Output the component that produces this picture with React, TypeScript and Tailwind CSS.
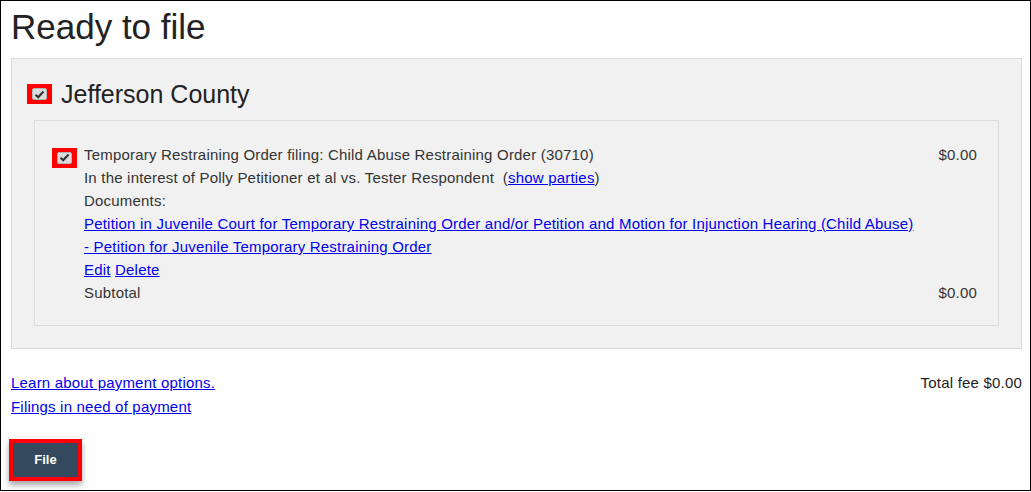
import React from "react";

function Check() {
  return (
    <span className="inline-flex items-center justify-center w-[25px] h-[20px] bg-[#ff0000] shrink-0">
      <span className="flex items-center justify-center w-[15px] h-[12px] bg-[#dcdcdc] border border-[#b5b5b5] rounded-[2px]">
        <svg width="11" height="9" viewBox="0 0 11 9">
          <path d="M1.5 4.8 L4.2 7.3 L9.5 1.5" fill="none" stroke="#333" strokeWidth="2.2" />
        </svg>
      </span>
    </span>
  );
}

export default function App() {
  const link = "text-[#0000ee] underline";
  return (
    <div
      className="w-[1031px] h-[491px] border border-black bg-white pl-[10px] pr-[8px] text-[#333] overflow-hidden"
      style={{ fontFamily: '"Liberation Sans", Arial, sans-serif' }}
    >
      <h1 className="text-[35px] leading-[40px] mt-[6px] mb-[11px] text-[#222]">Ready to file</h1>
      <div className="bg-[#f1f1f1] border border-[#dcdcdc] px-[22px] pt-[20px] pb-[22px]">
        <div className="flex items-center gap-[9px] ml-[-7px] h-[30px] mb-[11px]">
          <Check />
          <span className="text-[25px] leading-[30px] text-[#222]">Jefferson County</span>
        </div>
        <div className="border border-[#dcdcdc] pl-[17px] pr-[21px] pt-[22px] pb-[21px] text-[15px] tracking-[0.2px] leading-[23px]">
          <div className="flex">
            <div className="pt-[2px] mr-[7px]">
              <Check />
            </div>
            <div className="flex-1">
              <div className="flex justify-between">
                <span>Temporary Restraining Order filing: Child Abuse Restraining Order (30710)</span>
                <span>$0.00</span>
              </div>
              <div>
                In the interest of Polly Petitioner et al vs. Tester Respondent&nbsp; (<a className={link} href="#">show parties</a>)
              </div>
              <div>Documents:</div>
              <div>
                <a className={link} href="#">
                  Petition in Juvenile Court for Temporary Restraining Order and/or Petition and Motion for Injunction Hearing (Child Abuse)
                </a>
              </div>
              <div>
                <a className={link} href="#">- Petition for Juvenile Temporary Restraining Order</a>
              </div>
              <div>
                <a className={link} href="#">Edit</a> <a className={link} href="#">Delete</a>
              </div>
              <div className="flex justify-between">
                <span>Subtotal</span>
                <span>$0.00</span>
              </div>
            </div>
          </div>
        </div>
      </div>
      <div className="flex justify-between mt-[22px] text-[15px] tracking-[0.2px] leading-[24px]">
        <div className="flex flex-col">
          <a className={link} href="#">Learn about payment options.</a>
          <a className={link} href="#">Filings in need of payment</a>
        </div>
        <div className="text-[#222]">Total fee $0.00</div>
      </div>
      <div className="mt-[20px] ml-[-2px]">
        <button className="border-[4px] border-[#ff0000] bg-[#34495e] text-white font-bold text-[13px] w-[73px] h-[42px] shadow-[0_4px_6px_rgba(0,0,0,0.35)]">
          File
        </button>
      </div>
    </div>
  );
}
